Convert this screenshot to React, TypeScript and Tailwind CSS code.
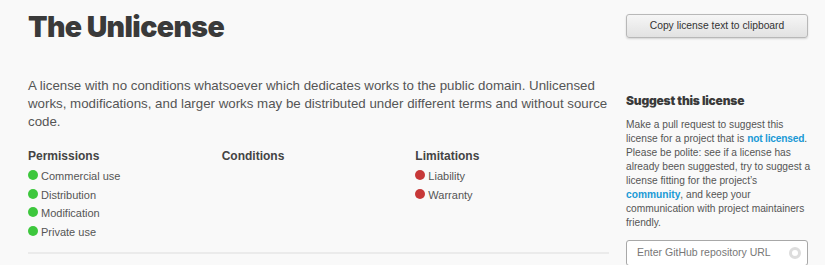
import React from 'react';

const permissions = ['Commercial use', 'Distribution', 'Modification', 'Private use'];
const conditions: string[] = [];
const limitations = ['Liability', 'Warranty'];

function RuleColumn({ title, items, dot }: { title: string; items: string[]; dot: string }) {
  return (
    <div className="w-[194px]">
      <h3 className="text-[12px] font-bold text-[#444] leading-[18px] mb-[2px]">{title}</h3>
      <ul>
        {items.map((item) => (
          <li key={item} className="flex items-center h-[18.5px] text-[11px] text-[#555]">
            <span className={`inline-block w-[10px] h-[10px] rounded-full mr-[3px] -mt-[2px] ${dot}`} />
            {item}
          </li>
        ))}
      </ul>
    </div>
  );
}

export default function App() {
  return (
    <div className="w-[825px] h-[265px] overflow-hidden bg-[#f9f9f9] font-['Liberation_Sans',Arial,sans-serif] text-[#555]">
      <div className="flex pl-[28px] gap-[17px]">
        <div className="w-[581px]">
          <h1 className="font-['Inter','Liberation_Sans',sans-serif] font-black text-[28.5px] leading-[38px] text-[#3a3a3a] tracking-[-0.6px] pt-[8px]">
            The Unlicense
          </h1>
          <p className="mt-[31px] text-[13.3px] leading-[18px] text-[#555]">
            A license with no conditions whatsoever which dedicates works to the public domain. Unlicensed works,
            modifications, and larger works may be distributed under different terms and without source code.
          </p>
          <div className="flex mt-[16px]">
            <RuleColumn title="Permissions" items={permissions} dot="bg-[#3dc73d]" />
            <RuleColumn title="Conditions" items={conditions} dot="bg-[#3d7dc7]" />
            <RuleColumn title="Limitations" items={limitations} dot="bg-[#c73838]" />
          </div>
          <div className="mt-[11px] h-[2px] bg-[#ebebeb]" />
        </div>
        <div className="w-[188px]">
          <button className="mt-[14px] w-[182px] h-[24px] rounded-[3px] border border-[#b8b8b8] bg-gradient-to-b from-[#f6f6f6] to-[#e2e2e2] shadow-[0_1px_2px_rgba(0,0,0,0.15)] text-[10.3px] text-[#333]">
            Copy license text to clipboard
          </button>
          <h3 className="mt-[54px] font-['Inter','Liberation_Sans',sans-serif] font-black text-[12px] leading-[18px] text-[#3a3a3a] tracking-[-0.2px]">
            Suggest this license
          </h3>
          <p className="mt-[8px] text-[10.2px] leading-[14px] text-[#555]">
            Make a pull request to suggest this license for a project that is{' '}
            <a className="font-bold text-[#1a9ad6] tracking-[-0.2px]">not licensed</a>. Please be polite: see if a
            license has already been suggested, try to suggest a license fitting for the project’s{' '}
            <a className="font-bold text-[#1a9ad6]">community</a>, and keep your communication with project
            maintainers friendly.
          </p>
          <div className="mt-[10px] w-[182px] h-[26px] flex items-center justify-between border border-[#a8a8a8] rounded-[3px] bg-white pl-[10px] pr-[6px]">
            <span className="text-[10.5px] text-[#777]">Enter GitHub repository URL</span>
            <span className="w-[12px] h-[12px] rounded-full border-[3px] border-[#ddd]" />
          </div>
        </div>
      </div>
    </div>
  );
}
